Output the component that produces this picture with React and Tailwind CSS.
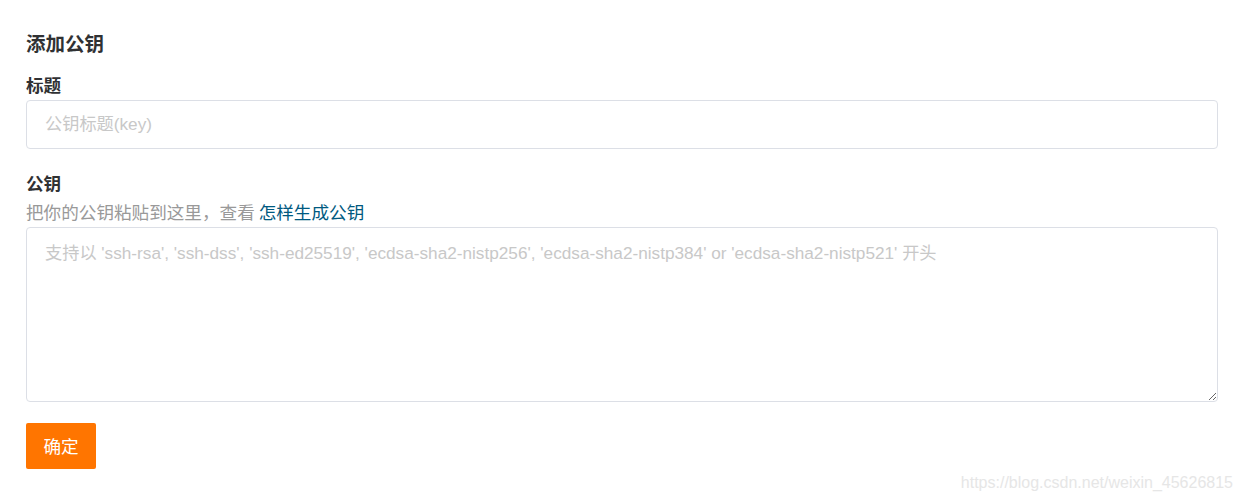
export default function App() {
  const font = { fontFamily: '"Noto Sans CJK SC", "Noto Sans", sans-serif' };
  const latin = { fontFamily: '"Liberation Sans", "Noto Sans CJK SC", sans-serif' };
  return (
    <div className="relative w-[1243px] h-[503px] bg-white" style={font}>
      <div className="pl-[26px] pr-[25px] pt-[29px] flex flex-col">
        <h3 className="text-[19.5px] leading-[28px] font-bold text-[#303133]">添加公钥</h3>
        <label className="mt-[16px] text-[17.6px] leading-[24px] font-bold text-[#303133]">标题</label>
        <input
          className="mt-[3px] h-[49px] w-full border border-[#dcdfe6] rounded-[4px] px-[18px] text-[17.2px] outline-none placeholder:text-[#c8c8c8]"
          style={latin}
          placeholder="公钥标题(key)"
        />
        <label className="mt-[22px] text-[17.6px] leading-[24px] font-bold text-[#303133]">公钥</label>
        <p className="mt-[5px] text-[17.6px] leading-[24px] text-[#999999]">
          把你的公钥粘贴到这里，查看 <a className="text-[#005980]">怎样生成公钥</a>
        </p>
        <textarea
          className="mt-[3px] h-[175px] w-full border border-[#dcdfe6] rounded-[4px] px-[18px] py-[13px] text-[17.2px] leading-[24px] outline-none resize-y placeholder:text-[#c8c8c8]"
          style={latin}
          placeholder="支持以 'ssh-rsa', 'ssh-dss', 'ssh-ed25519', 'ecdsa-sha2-nistp256', 'ecdsa-sha2-nistp384' or 'ecdsa-sha2-nistp521' 开头"
        />
        <div className="mt-[21px]">
          <button className="h-[46px] w-[70px] rounded-[2px] bg-[#ff7500] text-white text-[17.6px]">确定</button>
        </div>
      </div>
      <div
        className="absolute right-[10px] bottom-[8px] text-[16px] text-[#e6e6e6]"
        style={{ fontFamily: '"Liberation Sans", sans-serif' }}
      >
        https://blog.csdn.net/weixin_45626815
      </div>
    </div>
  );
}
